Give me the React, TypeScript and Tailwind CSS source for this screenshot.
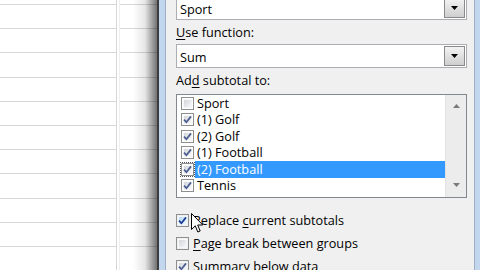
import React from 'react';

const font = { fontFamily: '"Open Sans", "Liberation Sans", sans-serif' };

const Check: React.FC<{ checked?: boolean; hover?: boolean; focus?: boolean }> = ({ checked, hover, focus }) => (
  <div
    className={`w-[13px] h-[13px] shrink-0 border border-[#8e8f8f] p-px ${focus ? 'outline outline-1 outline-dotted outline-[#555]' : ''}`}
  >
    <div
      className={`w-full h-full border border-white/70 relative ${
        hover ? 'bg-gradient-to-br from-[#b9dcf5] to-[#eaf6fd]' : 'bg-gradient-to-br from-[#d3d6dc] to-[#f6f6f6]'
      }`}
    >
      {checked && (
        <svg viewBox="0 0 9 9" className="absolute -left-px -top-px w-[9px] h-[9px]">
          <path d="M1 4.6 L3.4 7.2 L8 1.4" fill="none" stroke={hover ? '#1a3c92' : '#4a5d8f'} strokeWidth="1.7" />
        </svg>
      )}
    </div>
  </div>
);

const Combo: React.FC<{ value: string; className?: string }> = ({ value, className }) => (
  <div className={`h-[24px] flex bg-white border border-[#abadb3] ${className ?? ''}`}>
    <div className="flex-1 flex items-center pl-[3px] pt-[1px] text-black leading-[14px]">{value}</div>
    <div className="w-[21px] m-px border border-[#8a8a8a] bg-gradient-to-b from-[#f3f3f3] to-[#cfcfcf] flex items-center justify-center">
      <svg viewBox="0 0 7 4" className="w-[7px] h-[4px]">
        <path d="M0 0 H7 L3.5 4 Z" fill="#000" />
      </svg>
    </div>
  </div>
);

const items = [
  { label: 'Sport', checked: false },
  { label: '(1) Golf', checked: true },
  { label: '(2) Golf', checked: true },
  { label: '(1) Football', checked: true },
  { label: '(2) Football', checked: true, selected: true },
  { label: 'Tennis', checked: true },
];

const Sheet: React.FC = () => (
  <div className="w-[157px] h-full relative bg-white flex">
    <div className="w-[117px] border-r border-[#d6d6d6] flex flex-col">
      <div className="h-[5px] shrink-0 border-b border-[#d8d8d8]" />
      {Array.from({ length: 11 }).map((_, i) => (
        <div key={i} className="h-[24.2px] shrink-0 border-b border-[#d8d8d8]" />
      ))}
    </div>
    <div className="flex-1 flex flex-col border-l border-[#eeeeee] ml-[2px]">
      <div className="h-[5px] shrink-0 border-b border-[#d8d8d8]" />
      {Array.from({ length: 11 }).map((_, i) => (
        <div key={i} className="h-[24.2px] shrink-0 border-b border-[#d8d8d8]" />
      ))}
    </div>
    {/* dialog shadow */}
    <div className="absolute top-0 bottom-0 right-0 w-[24px] bg-gradient-to-r from-transparent via-black/10 to-black/55 pointer-events-none" />
  </div>
);

export default function App() {
  return (
    <div className="w-[480px] h-[270px] overflow-hidden flex relative bg-white" style={font}>
      <Sheet />

      {/* Dialog frame */}
      <div className="flex-1 flex border-l-2 border-[#3d3d3d] bg-[#c2d6ee] pl-[6px] pr-[5px]">
        <div className="flex-1 bg-[#f0f0f0] border-x border-[#9fb0c6] pl-[10px] pr-[7px] flex flex-col text-[12.7px] text-black">
          <Combo value="Sport" className="-mt-[4px] shrink-0" />
          <div className="h-[24px] shrink-0 flex items-center pt-[2px]">
            <span><span className="underline underline-offset-2">U</span>se function:</span>
          </div>
          <Combo value="Sum" className="shrink-0" />
          <div className="h-[24px] shrink-0 flex items-center pt-[1px]">
            <span>Ad<span className="underline underline-offset-2">d</span> subtotal to:</span>
          </div>

          {/* List box */}
          <div className="mt-[2px] h-[104px] shrink-0 bg-white border border-[#828790] flex overflow-hidden">
            <div className="flex-1 flex flex-col">
              {items.map((it) => (
                <div key={it.label} className="h-[16.5px] shrink-0 flex items-center pl-[4px]">
                  <Check checked={it.checked} focus={it.selected} />
                  <div
                    className={`flex-1 h-full flex items-center ml-[1px] pl-[2px] ${
                      it.selected ? 'bg-[#3399ff] text-white' : ''
                    }`}
                  >
                    {it.label}
                  </div>
                </div>
              ))}
            </div>
            <div className="w-[21px] bg-[#ececec] border-l border-[#e2e2e2] flex flex-col justify-between items-center py-[9px]">
              <svg viewBox="0 0 7 4" className="w-[7px] h-[4px]">
                <path d="M0 4 H7 L3.5 0 Z" fill="#7a7a7a" />
              </svg>
              <svg viewBox="0 0 7 4" className="w-[7px] h-[4px] mb-[1px]">
                <path d="M0 0 H7 L3.5 4 Z" fill="#7a7a7a" />
              </svg>
            </div>
          </div>

          {/* Options */}
          <div className="mt-[11px] flex flex-col">
            <div className="h-[23px] flex items-center gap-[4px]">
              <Check checked hover />
              <span>Replace <span className="underline underline-offset-2">c</span>urrent subtotals</span>
            </div>
            <div className="h-[23px] flex items-center gap-[4px]">
              <Check />
              <span><span className="underline underline-offset-2">P</span>age break between groups</span>
            </div>
            <div className="h-[23px] flex items-center gap-[4px]">
              <Check checked />
              <span><span className="underline underline-offset-2">S</span>ummary below data</span>
            </div>
          </div>
        </div>
      </div>

      {/* Mouse pointer */}
      <svg viewBox="0 0 13 21" className="absolute left-[191px] top-[213px] w-[13px] h-[21px]">
        <path d="M0.5 0.5 L0.5 16.5 L4.3 12.8 L6.8 19 L9.2 18 L6.7 12 L11.8 12 Z" fill="#fff" stroke="#000" strokeWidth="1" strokeLinejoin="round" />
      </svg>
    </div>
  );
}
